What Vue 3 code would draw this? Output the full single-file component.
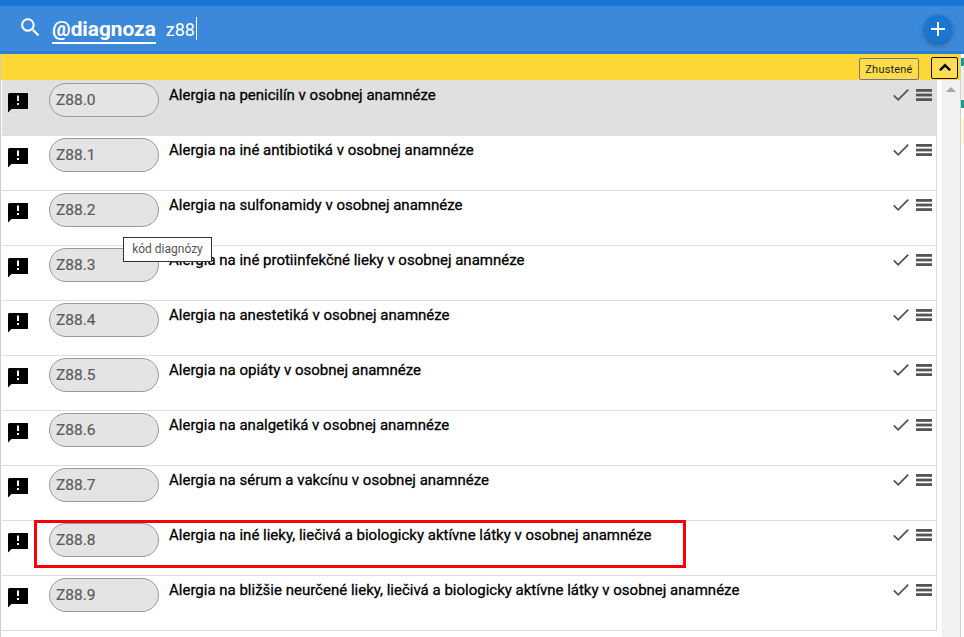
<script setup>
const rows = [
  ['Z88.0', 'Alergia na penicilín v osobnej anamnéze'],
  ['Z88.1', 'Alergia na iné antibiotiká v osobnej anamnéze'],
  ['Z88.2', 'Alergia na sulfonamidy v osobnej anamnéze'],
  ['Z88.3', 'Alergia na iné protiinfekčné lieky v osobnej anamnéze'],
  ['Z88.4', 'Alergia na anestetiká v osobnej anamnéze'],
  ['Z88.5', 'Alergia na opiáty v osobnej anamnéze'],
  ['Z88.6', 'Alergia na analgetiká v osobnej anamnéze'],
  ['Z88.7', 'Alergia na sérum a vakcínu v osobnej anamnéze'],
  ['Z88.8', 'Alergia na iné lieky, liečivá a biologicky aktívne látky v osobnej anamnéze'],
  ['Z88.9', 'Alergia na bližšie neurčené lieky, liečivá a biologicky aktívne látky v osobnej anamnéze'],
]
</script>

<template>
  <div class="page">
    <div class="strip"></div>
    <header class="search">
      <svg class="search-icon" viewBox="0 0 24 24" width="25" height="25">
        <path fill="#fff" d="M15.5 14h-.79l-.28-.27C15.41 12.59 16 11.11 16 9.5 16 5.91 13.09 3 9.5 3S3 5.91 3 9.5 5.91 16 9.5 16c1.61 0 3.09-.59 4.23-1.57l.27.28v.79l5 4.99L20.49 19l-4.99-5zm-6 0C7.01 14 5 11.99 5 9.5S7.01 5 9.5 5 14 7.01 14 9.5 11.99 14 9.5 14z" />
      </svg>
      <span class="tag">@diagnoza</span>
      <span class="query">z88</span>
      <span class="caret"></span>
      <button class="add">
        <svg viewBox="0 0 24 24" width="24" height="24">
          <path fill="#fff" d="M19 13h-6v6h-2v-6H5v-2h6V5h2v6h6v2z" />
        </svg>
      </button>
    </header>
    <div class="main">
      <div class="panel">
        <div class="toolbar">
          <button class="dense">Zhustené</button>
          <button class="collapse">
            <svg viewBox="0 0 24 24" width="22" height="22">
              <path fill="#000" d="M7.4 15.4 12 10.800l4.600 4.600 1.900-1.900L12 7l-6.500 6.500z" />
            </svg>
          </button>
        </div>
        <div class="content">
          <div class="list">
            <div v-for="(row, i) in rows" :key="row[0]" class="row" :class="{ active: i === 0 }">
              <svg class="alert" viewBox="0 0 24 24" width="24" height="24">
                <path fill="#000" fill-rule="evenodd" d="M3 3h18.500l.5.5v15l-.5.5H5.500L2 22.500V4zM11 5.500v5.500h2V5.500zM11 13v2h2v-2z" />
              </svg>
              <div class="code">{{ row[0] }}</div>
              <div class="title">{{ row[1] }}</div>
              <div class="actions">
                <svg class="check" viewBox="3.4 5.6 17.6 13.4" width="16" height="12">
                  <path fill="#555" d="M9 16.2L4.8 12l-1.4 1.4L9 19 21 7l-1.4-1.4L9 16.2z" />
                </svg>
                <svg class="menu" viewBox="0 0 16 12" width="16" height="12">
                  <rect width="16" height="2.800" y="0" fill="#555" />
                  <rect width="16" height="2.800" y="4.600" fill="#555" />
                  <rect width="16" height="2.800" y="9.200" fill="#555" />
                </svg>
              </div>
            </div>
          </div>
          <div class="gap"></div>
          <div class="scrollbar"><span class="arrow"></span></div>
        </div>
        <div class="tooltip">kód diagnózy</div>
        <div class="highlight"></div>
      </div>
      <div class="behind">
        <span class="teal"></span>
        <span class="pale"></span>
        <span class="teal"></span>
        <span class="cream"></span>
      </div>
    </div>
  </div>
</template>

<style>
html, body { margin: 0; background: #fff; overflow: hidden; }
</style>

<style scoped>
.page {
  width: 964px;
  height: 637px;
  display: flex;
  flex-direction: column;
  overflow: hidden;
  font-family: Roboto, "Liberation Sans", sans-serif;
}
.strip { height: 6px; background: #1976d2; }
.search {
  height: 45px;
  border-bottom: 3px solid #2d7dd2;
  background: #3c88da;
  display: flex;
  align-items: center;
  color: #fff;
  padding-left: 17px;
  padding-right: 12px;
}
.search-icon { flex: none; margin-top: -3px; margin-left: 1px; }
.tag {
  margin-left: 9px;
  font-size: 20.8px;
  font-weight: 700;
  line-height: 26px;
  border-bottom: 2px solid #fff;
  margin-top: 2px;
}
.query { margin-left: 10px; font-size: 18px; font-weight: 400; margin-top: 2px; }
.caret { width: 1px; height: 23px; background: #fff; margin-left: 1px; }
.add {
  margin-left: auto;
  width: 28px;
  height: 28px;
  padding: 0;
  border: 0;
  border-radius: 50%;
  background: #1976d2;
  box-shadow: 0 2px 5px rgba(0, 0, 0, .35);
  display: flex;
  align-items: center;
  justify-content: center;
}
.main { flex: 1; min-height: 0; display: flex; }
.panel {
  position: relative;
  width: 959px;
  border-left: 1px solid #ccc;
  border-right: 1px solid #d0d0d0;
  display: flex;
  flex-direction: column;
}
.toolbar {
  height: 26px;
  flex: none;
  background: #fdd835;
  display: flex;
  align-items: center;
  box-sizing: border-box;
  padding: 3px 0 0 858px;
}
.dense {
  width: 60px;
  height: 22px;
  padding: 0;
  margin-top: 1px;
  box-sizing: border-box;
  background: #ffdc4a;
  border: 1px solid #777;
  border-radius: 2px;
  font: 11px Roboto, sans-serif;
  letter-spacing: .2px;
  color: #222;
}
.collapse {
  width: 27px;
  height: 22px;
  padding: 0;
  margin-left: 12px;
  margin-top: -1px;
  box-sizing: border-box;
  background: #ffdc55;
  border: 1px solid #111;
  border-radius: 2px;
  display: flex;
  align-items: center;
  justify-content: center;
}
.content { flex: 1; min-height: 0; display: flex; }
.list {
  width: 935px;
  height: 551px;
  box-sizing: border-box;
  margin-left: 1px;
  border-right: 1px solid #ddd;
  border-bottom: 1px solid #ddd;
}
.row {
  height: 55px;
  box-sizing: border-box;
  border-top: 1px solid #ddd;
  padding: 2px 4px 0 4px;
  display: flex;
  align-items: flex-start;
  background: #fff;
}
.row.active { background: #e0e0e0; border-top-color: #e0e0e0; }
.alert { flex: none; margin-top: 7px; }
.code {
  flex: none;
  width: 110px;
  height: 34px;
  margin-left: 19px;
  box-sizing: border-box;
  padding-left: 6px;
  border: 1px solid #999;
  border-radius: 17px;
  background: #e4e4e4;
  color: #5c5c5c;
  font-size: 15.5px;
  font-weight: 400;
  -webkit-text-stroke: .2px #5c5c5c;
  line-height: 32px;
}
.title {
  margin-left: 10px;
  margin-top: 3px;
  font-size: 15px;
  font-weight: 400;
  -webkit-text-stroke: .3px #000;
  line-height: 19px;
  color: #000;
}
.actions {
  margin-left: auto;
  display: flex;
  align-items: center;
  gap: 7px;
  margin-top: 6px;
}
.gap { width: 5px; background: #fff; }
.scrollbar {
  flex: 1;
  background: #f1f1f1;
  display: flex;
  justify-content: center;
  padding-top: 7px;
  box-sizing: border-box;
}
.arrow {
  width: 0;
  height: 0;
  border-left: 5px solid transparent;
  border-right: 5px solid transparent;
  border-bottom: 5px solid #a6a6a6;
}
.tooltip {
  position: absolute;
  left: 122px;
  top: 183px;
  width: 89px;
  height: 25px;
  box-sizing: border-box;
  background: #fff;
  border: 1px solid #333;
  font-size: 12px;
  line-height: 23px;
  text-align: center;
  color: #555;
}
.highlight {
  position: absolute;
  left: 33px;
  top: 466px;
  width: 652px;
  height: 48px;
  box-sizing: border-box;
  border: 3px solid #f00;
}
.behind {
  width: 3px;
  display: flex;
  flex-direction: column;
  padding-top: 4px;
}
.teal { height: 8px; background: #1a9a8a; }
.pale { height: 34px; background: #f2f0e8; }
.cream { height: 26px; background: #fbf8dc; margin-top: 10px; }
</style>
